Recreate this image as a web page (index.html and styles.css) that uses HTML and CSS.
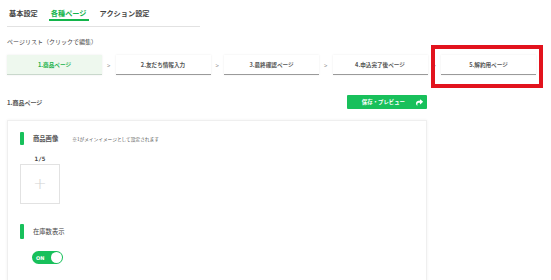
FILE: index.html
```html
<!DOCTYPE html>
<html lang="ja">
<head>
<meta charset="utf-8">
<link rel="stylesheet" href="styles.css">
</head>
<body>
<div class="page">
  <nav class="tabs">
    <span class="tab">基本設定</span>
    <span class="tab active">各種ページ</span>
    <span class="tab">アクション設定</span>
  </nav>

  <div class="list-label">ページリスト（クリックで編集）</div>

  <div class="steps">
    <div class="step current">1.商品ページ</div>
    <div class="sep">&gt;</div>
    <div class="step">2.友だち情報入力</div>
    <div class="sep">&gt;</div>
    <div class="step">3.最終確認ページ</div>
    <div class="sep">&gt;</div>
    <div class="step">4.申込完了後ページ</div>
    <div class="sep">&gt;</div>
    <div class="step marked">5.解約用ページ<span class="highlight"></span></div>
  </div>

  <div class="page-head">
    <span class="page-name">1.商品ページ</span>
    <button class="save-btn">保存・プレビュー
      <svg class="share" viewBox="0 0 512 512" width="7" height="7"><path fill="#fff" d="M503.7 189.8L327.7 37.9C312.3 24.5 288 35.3 288 56v80.1C127.4 137.9 0 170.1 0 322.3c0 61.4 39.6 122.3 83.3 154.1 13.700 9.9 33.1-2.5 28.1-18.6C66.1 312.8 132.9 274.3 288 272.1V360c0 20.7 24.3 31.5 39.7 18.2l176-152c11.1-9.6 11.1-26.8 0-36.4z"/></svg>
    </button>
  </div>

  <div class="card">
    <div class="field-head">
      <span class="bar"></span>
      <span class="field-title">商品画像</span>
      <span class="note">※1がメインイメージとして設定されます</span>
    </div>
    <div class="image-slot">
      <div class="count">1/5</div>
      <div class="image-box"><span class="plus">+</span></div>
    </div>

    <div class="field-head second">
      <span class="bar tall"></span>
      <span class="field-title normal">在庫数表示</span>
    </div>
    <div class="toggle"><span class="toggle-text">ON</span><span class="knob"></span></div>
  </div>
</div>
</body>
</html>
```

FILE: styles.css
```css
html, body {
  margin: 0;
  background: #fff;
}
body {
  font-family: "Noto Sans CJK JP", "Noto Sans", sans-serif;
  color: #333;
}
.page {
  padding-left: 7px;
  height: 280px;
  overflow: hidden;
}
.tabs {
  display: flex;
  gap: 9px;
  width: 193px;
  height: 26px;
  border-bottom: 1px solid #e2e2e2;
  align-items: flex-start;
}
.tab {
  padding: 8px 2px 1px;
  font-size: 7.2px;
  line-height: 10px;
  font-weight: bold;
  color: #444;
  border-bottom: 2px solid transparent;
}
.tab.active {
  color: #13b54b;
  border-bottom-color: #13b54b;
}
.list-label {
  margin-top: 11px;
  font-size: 6px;
  line-height: 8px;
  color: #444;
}
.steps {
  margin-top: 9px;
  display: flex;
  align-items: center;
}
.step {
  position: relative;
  width: 95px;
  height: 19px;
  display: flex;
  align-items: center;
  justify-content: center;
  font-size: 5.6px;
  font-weight: bold;
  color: #555;
  background: #fff;
  border-bottom: 1px solid #9a9a9a;
  box-shadow: 0 0 2px rgba(0,0,0,0.08);
}
.step.current {
  background: #eef8ee;
  color: #18b04a;
  border-bottom-color: #c9d8cc;
}
.sep {
  width: 13.5px;
  text-align: center;
  font-size: 6px;
  color: #888;
}
.highlight {
  position: absolute;
  left: -10px;
  top: -10px;
  right: -7px;
  bottom: -14px;
  border: 4px solid #e2131d;
}
.page-head {
  width: 420px;
  margin-top: 20px;
  display: flex;
  justify-content: space-between;
  align-items: center;
}
.page-name {
  font-size: 6px;
  font-weight: bold;
  color: #555;
}
.save-btn {
  width: 80px;
  height: 14px;
  border: none;
  border-radius: 1px;
  background: #18c05b;
  color: #fff;
  font-family: inherit;
  font-size: 5.4px;
  font-weight: bold;
  display: flex;
  align-items: center;
  justify-content: flex-end;
  gap: 11px;
  padding: 0 4px 0 0;
}
.share {
  display: block;
}
.card {
  margin-top: 11px;
  width: 420px;
  height: 170px;
  box-sizing: border-box;
  border: 1px solid #efefef;
  box-shadow: 0 0 3px rgba(0,0,0,0.06);
  padding: 11px 0 0 12px;
}
.field-head {
  display: flex;
  align-items: center;
}
.bar {
  width: 4px;
  height: 13px;
  background: #18c05b;
  border-radius: 1px;
}
.bar.tall {
  height: 15px;
}
.field-title {
  margin-left: 9px;
  font-size: 6.3px;
  font-weight: bold;
  color: #555;
}
.field-title.normal {
  font-weight: normal;
  color: #444;
}
.note {
  margin-left: 14px;
  font-size: 4.7px;
  color: #555;
}
.image-slot {
  width: 40px;
  margin-top: 10px;
}
.count {
  text-align: center;
  font-family: "DejaVu Sans Mono", monospace;
  font-weight: bold;
  font-size: 6px;
  line-height: 8px;
  color: #444;
}
.image-box {
  margin-top: 1px;
  width: 40px;
  height: 40px;
  box-sizing: border-box;
  border: 1px solid #e2e2e2;
  display: flex;
  align-items: center;
  justify-content: center;
}
.plus {
  font-family: "DejaVu Sans", sans-serif;
  font-size: 16px;
  font-weight: 300;
  color: #d2d2d2;
  line-height: 1;
}
.field-head.second {
  margin-top: 20px;
}
.toggle {
  margin: 12px 0 0 12px;
  width: 31px;
  height: 13px;
  border-radius: 7px;
  background: #18c05b;
  display: flex;
  align-items: center;
  justify-content: space-between;
  padding: 0 1px 0 4px;
  box-sizing: border-box;
}
.toggle-text {
  font-family: "DejaVu Sans", sans-serif;
  font-size: 5px;
  font-weight: bold;
  color: #fff;
}
.knob {
  width: 11px;
  height: 11px;
  border-radius: 50%;
  background: #fff;
}
```
